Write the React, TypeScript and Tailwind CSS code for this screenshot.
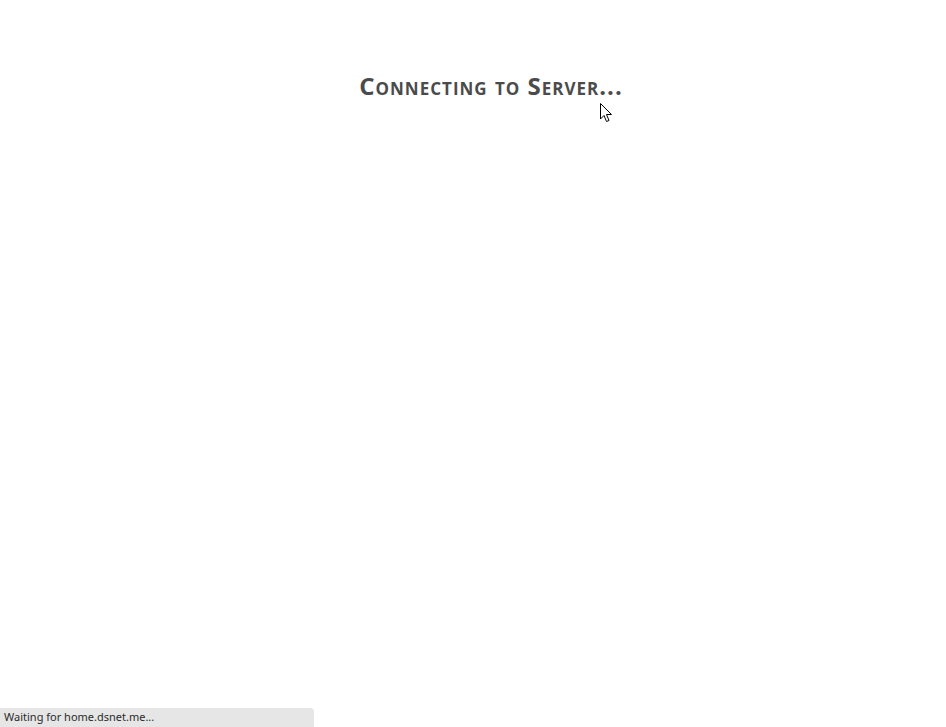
export default function App() {
  return (
    <div className="relative h-[727px] w-[946px] overflow-hidden bg-white">
      <div className="flex justify-center pt-[68px] pl-[36px]">
        <h1
          className="text-[24px] font-bold tracking-[1px] text-[#4b4b4b]"
          style={{ fontFamily: '"Open Sans", "DejaVu Sans", sans-serif', fontVariant: 'small-caps' }}
        >
          Connecting to Server...
        </h1>
      </div>

      <svg className="absolute left-[600px] top-[103px]" width="13" height="20" viewBox="0 0 13 20">
        <path
          d="M0.5 0.5 L0.5 16 L4 12.5 L6.5 18.5 L9 17.5 L6.5 11.5 L11.5 11.5 Z"
          fill="#fff"
          stroke="#000"
          strokeWidth="1"
          strokeLinejoin="miter"
        />
      </svg>

      <div
        className="absolute bottom-0 left-0 flex h-[19px] w-[314px] items-center rounded-tr-[4px] bg-[#e6e6e6] pl-[4px] text-[11px] text-[#2b2b2b]"
        style={{ fontFamily: '"Noto Sans", "DejaVu Sans", sans-serif' }}
      >
        Waiting for home.dsnet.me...
      </div>
    </div>
  );
}
